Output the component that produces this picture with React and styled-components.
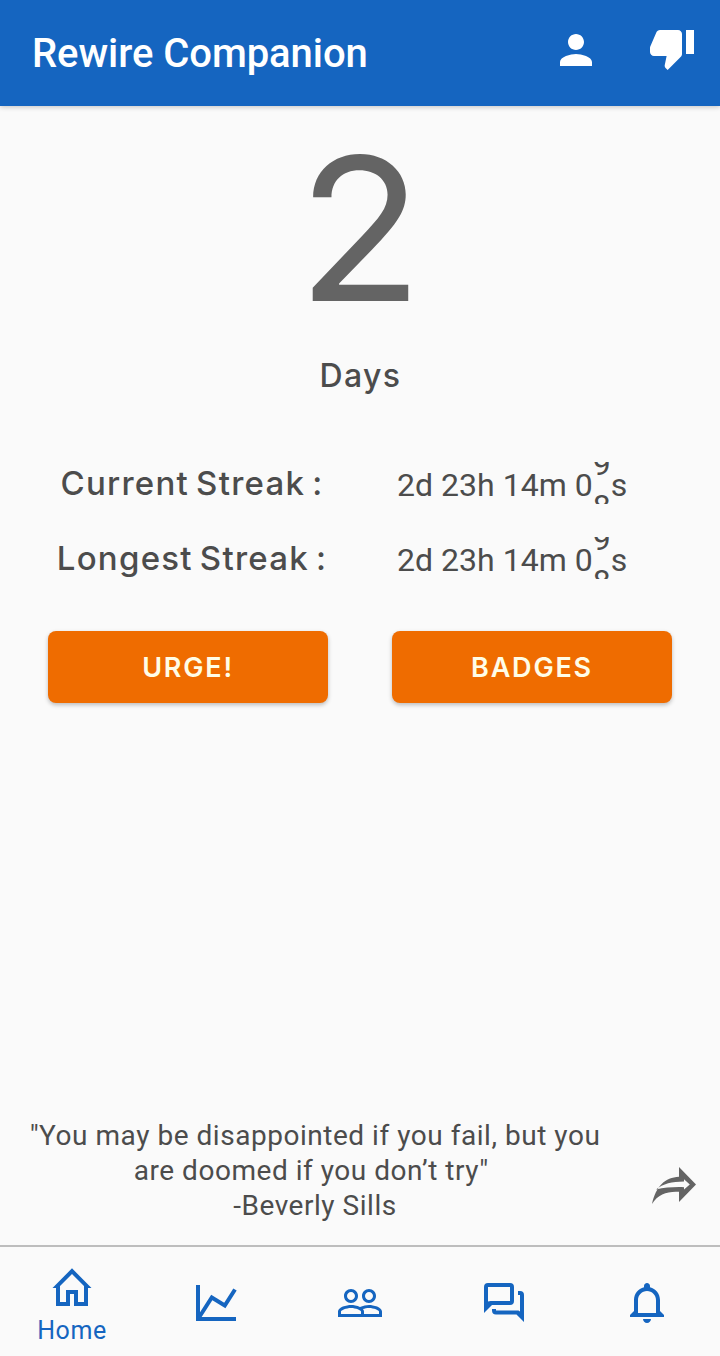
import styled, { createGlobalStyle } from 'styled-components'

const GlobalStyle = createGlobalStyle`
  * {
    box-sizing: border-box;
  }

  body {
    margin: 0;
    background-color: #fafafa;
    font-family: Roboto, sans-serif;
    color: #4c4c4c;
  }
`

const Screen = styled.div`
  display: flex;
  flex-direction: column;
  width: 720px;
  height: 1356px;
  overflow: hidden;
  background-color: #fafafa;
`

const Header = styled.header`
  display: flex;
  align-items: center;
  height: 106px;
  padding: 0 24px 6px 32px;
  background-color: #1565c0;
  box-shadow: 0 1px 5px rgba(0, 0, 0, 0.22);
`

const Title = styled.h1`
  flex: 1;
  margin: 0;
  padding-top: 7px;
  font-size: 40px;
  font-weight: 500;
  line-height: 48px;
  letter-spacing: -0.06px;
  color: #ffffff;
`

const HeaderActions = styled.div`
  display: flex;
  align-items: flex-end;
  gap: 48px;
`

const IconButton = styled.button`
  display: flex;
  padding: 0 0 ${(props) => props.$lift || 0}px;
  border: none;
  background: none;
  color: ${(props) => props.$color || '#ffffff'};
  cursor: pointer;
`

const Main = styled.main`
  display: flex;
  flex-direction: column;
  flex: 1;
`

const Counter = styled.div`
  display: flex;
  flex-direction: column;
  align-items: center;
  padding-top: 22px;
`

const CounterNumber = styled.div`
  height: 200px;
  font-family: Inter, sans-serif;
  font-size: 200px;
  font-weight: 400;
  line-height: 201px;
  color: #646464;
  transform: scaleX(1.03);
`

const CounterLabel = styled.div`
  margin-top: 28px;
  padding-left: 1px;
  font-family: Inter, sans-serif;
  font-size: 32px;
  font-weight: 450;
  line-height: 40px;
  letter-spacing: 1.4px;
`

const Streaks = styled.div`
  display: flex;
  flex-direction: column;
  gap: 33px;
  margin-top: 66px;
`

const StreakRow = styled.div`
  display: grid;
  grid-template-columns: 384px 1fr;
  align-items: center;
  height: 42px;
`

const StreakLabel = styled.div`
  padding-bottom: 1px;
  font-family: Inter, sans-serif;
  font-size: 33px;
  font-weight: 450;
  line-height: 40px;
  letter-spacing: 1.25px;
  word-spacing: -3px;
  text-align: center;
  white-space: pre;
`

const Timer = styled.div`
  display: flex;
  height: 42px;
  padding-left: 13px;
  font-size: 32px;
  line-height: 46px;
  letter-spacing: 0.02px;
  white-space: pre;
`

const RollingDigit = styled.span`
  display: flex;
  flex-direction: column;
  height: 42px;
  overflow: hidden;

  span {
    flex: none;
    height: 42px;
    line-height: 46px;
  }

  span:first-child {
    margin-top: -21px;
  }
`

const Buttons = styled.div`
  display: flex;
  gap: 64px;
  margin-top: 52px;
  padding: 0 48px;
`

const ActionButton = styled.button`
  flex: 1;
  height: 72px;
  padding: 0;
  border: none;
  border-radius: 8px;
  background-color: #ef6c00;
  box-shadow: 0 2px 4px rgba(0, 0, 0, 0.25);
  font-family: Inter, sans-serif;
  font-size: 27px;
  font-weight: 600;
  letter-spacing: 1.8px;
  color: #fffde7;
  cursor: pointer;
`

const QuoteRow = styled.div`
  display: flex;
  align-items: flex-end;
  margin-top: auto;
  padding: 0 24px 22px 0;
`

const Quote = styled.p`
  width: 630px;
  margin: 0;
  font-size: 28px;
  line-height: 35px;
  letter-spacing: 0.53px;
  text-align: center;
`

const ShareButton = styled(IconButton)`
  margin: 0 0 19px auto;
`

const BottomNav = styled.nav`
  display: grid;
  grid-template-columns: repeat(5, 1fr);
  height: 111px;
  border-top: 2px solid #bdbdbd;
`

const NavItem = styled.a`
  display: flex;
  flex-direction: column;
  align-items: center;
  padding-top: ${(props) => (props.$active ? '17px' : '32px')};
  color: #1565c0;
`

const NavLabel = styled.span`
  margin-top: 4px;
  font-size: 25px;
  line-height: 30px;
  letter-spacing: 0.6px;
`

function Icon({ size = 24, children }) {
  return (
    <svg width="48" height="48" viewBox={`0 0 ${size} ${size}`} fill="currentColor">
      {children}
    </svg>
  )
}

const HomeIcon = () => (
  <Icon size={48}>
    <path
      fillRule="evenodd"
      d="M24 4.3L43.5 24H40v18H26V30h-4v12H8V24H4.5L24 4.3zM24 10L12 22v16h6V26h12v12h6V22L24 10z"
    />
  </Icon>
)

const ChartIcon = () => (
  <Icon size={48}>
    <path d="M4 6v36h40v-4H8V6z" />
    <path d="M7 38.5L19.8 18.5L32.8 26.5L43 10.5" fill="none" stroke="currentColor" strokeWidth="4" />
  </Icon>
)

const PeopleIcon = () => (
  <Icon>
    <path d="M16.5 13c-1.2 0-3.07.34-4.5 1-1.43-.67-3.3-1-4.5-1C5.33 13 1 14.08 1 16.25V19h22v-2.75c0-2.17-4.33-3.25-6.5-3.25zm-4 4.5h-10v-1.25c0-.54 2.56-1.75 5-1.75s5 1.21 5 1.75v1.25zm9 0H14v-1.25c0-.46-.2-.86-.52-1.22.88-.3 1.96-.53 3.02-.53 2.44 0 5 1.21 5 1.75v1.25zM7.5 12c1.93 0 3.5-1.57 3.5-3.5S9.43 5 7.5 5 4 6.57 4 8.5 5.57 12 7.5 12zm0-5.5c1.1 0 2 .9 2 2s-.9 2-2 2-2-.9-2-2 .9-2 2-2zm9 5.5c1.93 0 3.5-1.57 3.5-3.5S18.43 5 16.5 5 13 6.57 13 8.5s1.57 3.5 3.5 3.5zm0-5.5c1.1 0 2 .9 2 2s-.9 2-2 2-2-.9-2-2 .9-2 2-2z" />
  </Icon>
)

const ForumIcon = () => (
  <Icon size={48}>
    <path
      fillRule="evenodd"
      d="M8 4h22a4 4 0 0 1 4 4v14a4 4 0 0 1-4 4H12l-8 8V8a4 4 0 0 1 4-4zM8 8v14.6L10.6 22H30V8H8z"
    />
    <path d="M38 12h2a4 4 0 0 1 4 4v27l-7.5-7.5H16a4 4 0 0 1-4-4V30h4v1.5h22.5l1.5 1V16h-2z" />
  </Icon>
)

const BellIcon = () => (
  <Icon>
    <path d="M11.5 22c1.1 0 2-.9 2-2h-4c0 1.1.9 2 2 2zm6.5-6v-5.5c0-3.07-2.13-5.64-5-6.32V3.5c0-.83-.67-1.5-1.5-1.5S10 2.67 10 3.5v.68c-2.87.68-5 3.25-5 6.32V16l-2 2v1h17v-1l-2-2zm-2 1H7v-6.5C7 8.01 9.01 6 11.5 6S16 8.01 16 10.5V17z" />
  </Icon>
)

const PersonIcon = () => (
  <Icon>
    <path d="M12 12c2.21 0 4-1.79 4-4s-1.79-4-4-4-4 1.79-4 4 1.79 4 4 4zm0 2c-2.67 0-8 1.34-8 4v2h16v-2c0-2.66-5.33-4-8-4z" />
  </Icon>
)

const ThumbDownIcon = () => (
  <Icon>
    <path d="M15 3H6c-.83 0-1.54.5-1.84 1.22l-3.02 7.05c-.09.23-.14.47-.14.73v2c0 1.1.9 2 2 2h6.31l-.95 4.57-.03.32c0 .41.17.79.44 1.06L9.83 23l6.59-6.59c.36-.36.58-.86.58-1.41V5c0-1.1-.9-2-2-2zm4 0v12h4V3h-4z" />
  </Icon>
)

const ShareIcon = () => (
  <svg width="44" height="37" viewBox="0 0 44 37" fill="currentColor">
    <path
      fillRule="evenodd"
      d="M27 0L44 17.5L27 35V24.8C16 24 6 27 0 37C4 19 13 10.5 27 9.7zM32 12.3V14.5C20 14.7 11 16.5 4 22.5C13 20.6 22 19.8 32 20.2V22.6L37.8 17.4z"
    />
  </svg>
)

const streaks = [
  { label: 'Current Streak :', time: '2d 23h 14m 0', rolling: ['9', '8'] },
  { label: 'Longest Streak :', time: '2d 23h 14m 0', rolling: ['9', '8'] },
]

const tabs = [
  { id: 'home', label: 'Home', icon: HomeIcon },
  { id: 'stats', icon: ChartIcon },
  { id: 'people', icon: PeopleIcon },
  { id: 'forum', icon: ForumIcon },
  { id: 'alerts', icon: BellIcon },
]

export default function App() {
  return (
    <>
      <GlobalStyle />
      <Screen>
        <Header>
          <Title>Rewire Companion</Title>
          <HeaderActions>
            <IconButton $lift={2}>
              <PersonIcon />
            </IconButton>
            <IconButton $lift={4}>
              <ThumbDownIcon />
            </IconButton>
          </HeaderActions>
        </Header>
        <Main>
          <Counter>
            <CounterNumber>2</CounterNumber>
            <CounterLabel>Days</CounterLabel>
          </Counter>
          <Streaks>
            {streaks.map(({ label, time, rolling }) => (
              <StreakRow key={label}>
                <StreakLabel>{label}</StreakLabel>
                <Timer>
                  {time}
                  <RollingDigit>
                    {rolling.map((digit) => (
                      <span key={digit}>{digit}</span>
                    ))}
                  </RollingDigit>
                  s
                </Timer>
              </StreakRow>
            ))}
          </Streaks>
          <Buttons>
            <ActionButton>URGE!</ActionButton>
            <ActionButton>BADGES</ActionButton>
          </Buttons>
          <QuoteRow>
            <Quote>
              "You may be disappointed if you fail, but you
              <br />
              are doomed if you don’t try"&nbsp;
              <br />
              -Beverly Sills
            </Quote>
            <ShareButton $color="#646464">
              <ShareIcon />
            </ShareButton>
          </QuoteRow>
        </Main>
        <BottomNav>
          {tabs.map(({ id, label, icon: TabIcon }) => (
            <NavItem key={id} $active={!!label}>
              <TabIcon />
              {label && <NavLabel>{label}</NavLabel>}
            </NavItem>
          ))}
        </BottomNav>
      </Screen>
    </>
  )
}
